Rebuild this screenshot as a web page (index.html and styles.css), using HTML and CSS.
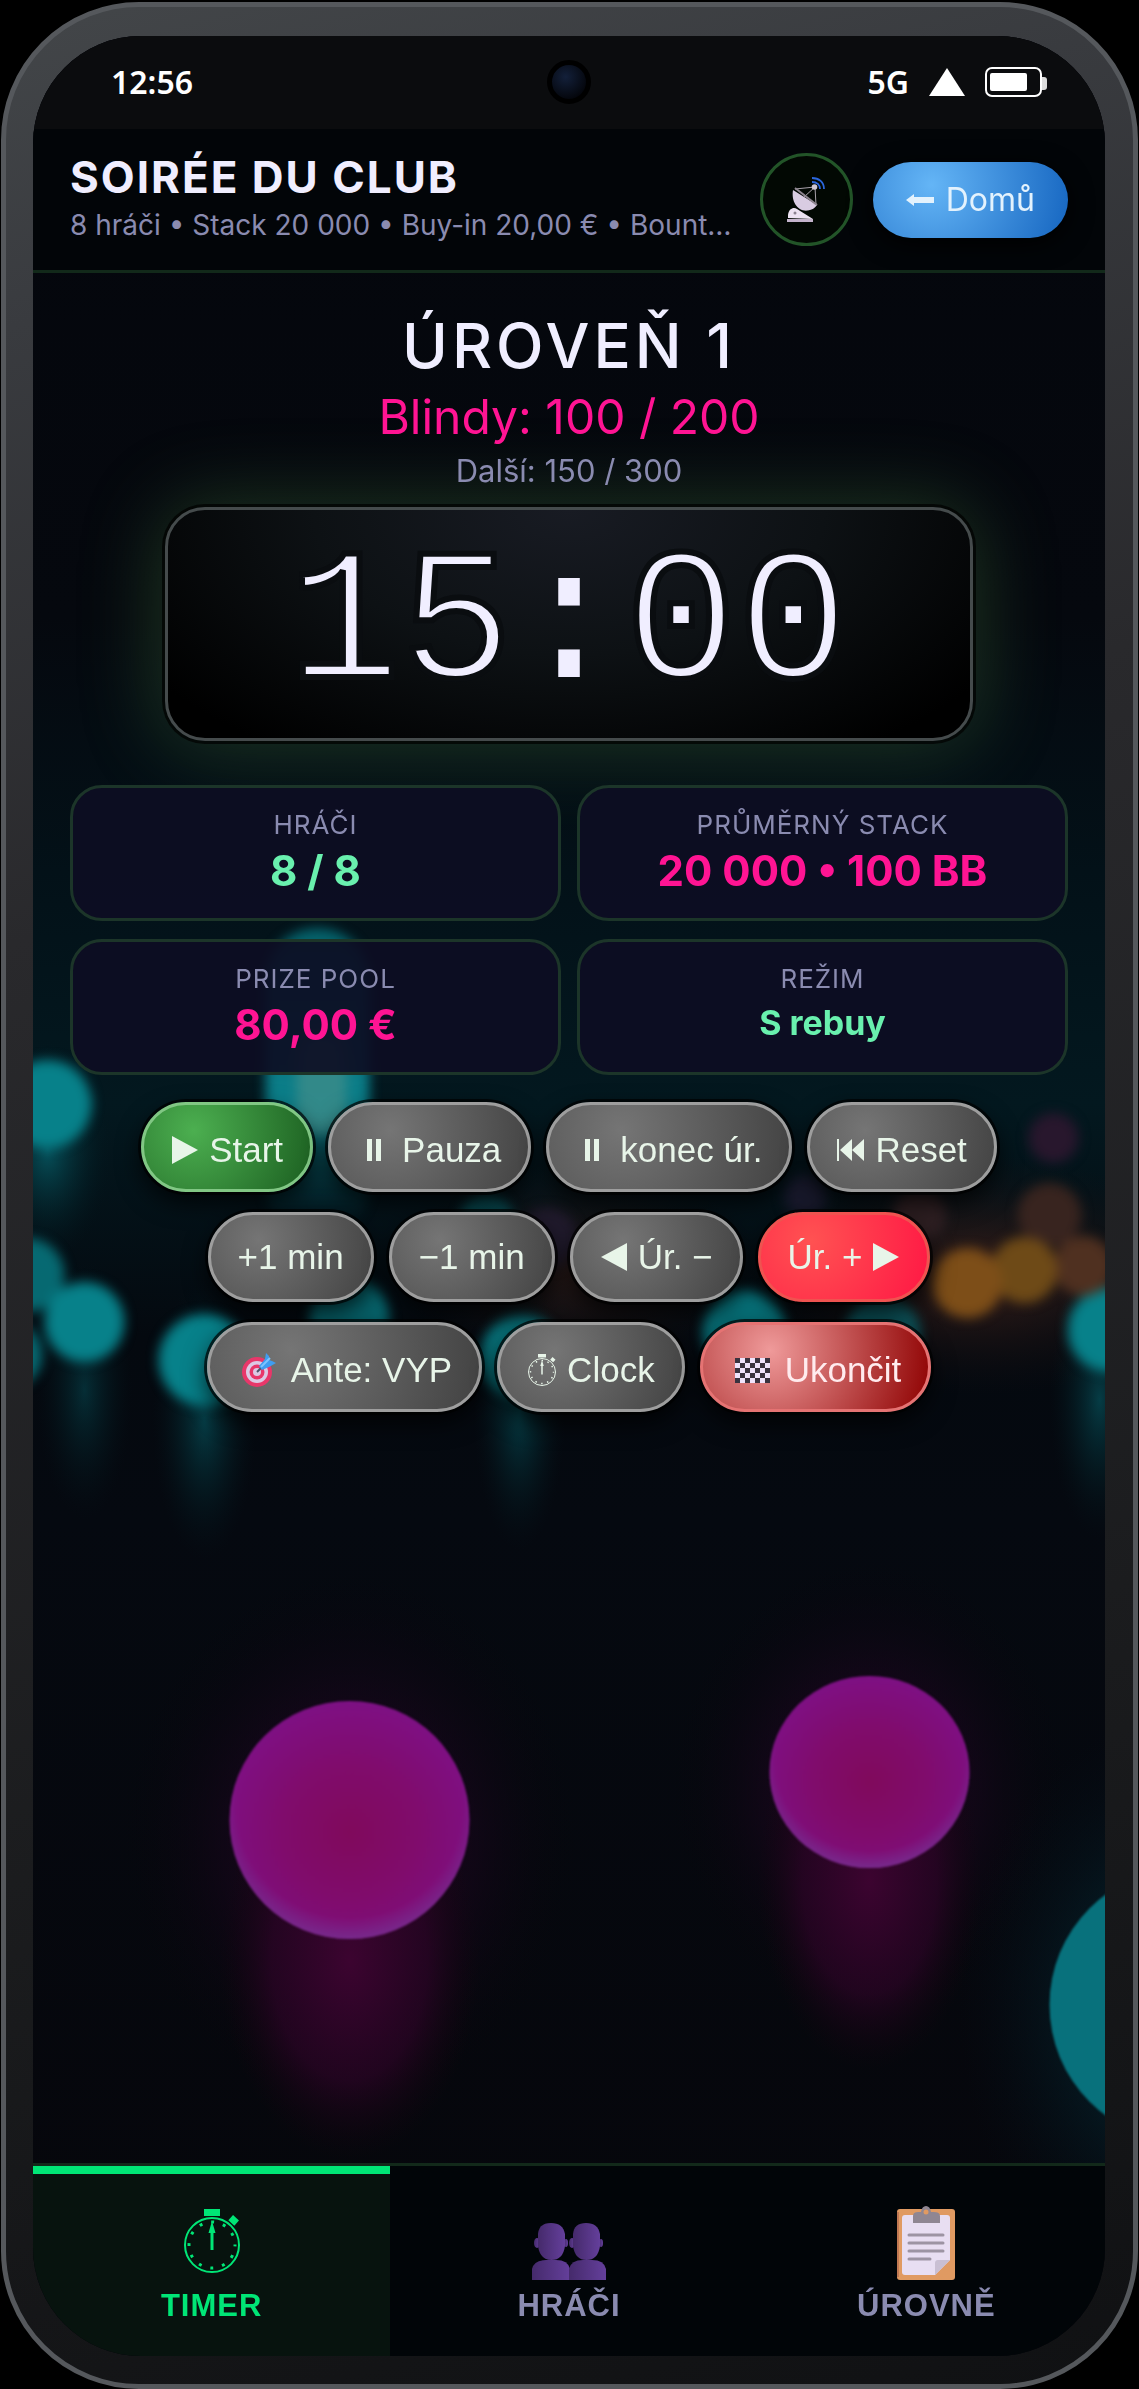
FILE: index.html
```html
<!DOCTYPE html>
<html lang="cs">

<head>
    <meta charset="UTF-8">
    <meta name="viewport" content="width=device-width, initial-scale=1.0">
    <title>Soirée du club</title>
    <link rel="stylesheet" href="styles.css">
</head>

<body>
    <!-- shared shapes -->
    <svg class="sprite" aria-hidden="true">
        <symbol id="stopwatch" viewBox="0 0 58 64">
            <rect x="21" y="0" width="16" height="7" />
            <rect x="47" y="8" width="8" height="7" transform="rotate(42 51 11)" />
            <circle cx="29" cy="36" r="27" fill="none" stroke="currentColor" stroke-width="2" />
            <path d="M27.500 41V24h-2l3.500-12 3.500 12h-2v17z" />
            <circle cx="29" cy="36" r="23" fill="none" stroke="currentColor" stroke-width="3" stroke-dasharray="3 9.040" stroke-dashoffset="1.500" />
        </symbol>
    </svg>

    <div class="phone">
        <div class="screen">
            <!-- bokeh background -->
            <svg class="bokeh" viewBox="33 36 1073 2320" preserveAspectRatio="xMidYMid slice" aria-hidden="true">
                <defs>
                    <filter id="soft" x="-30%" y="-30%" width="160%" height="160%" color-interpolation-filters="sRGB"><feGaussianBlur stdDeviation="6" /></filter>
                    <filter id="edge" color-interpolation-filters="sRGB"><feGaussianBlur stdDeviation="1" /></filter>
                    <linearGradient id="sky" x1="0" y1="0" x2="0" y2="1">
                        <stop offset="0" stop-color="#04060c" />
                        <stop offset=".25" stop-color="#05080e" />
                        <stop offset=".36" stop-color="#031118" />
                        <stop offset=".46" stop-color="#03181f" />
                        <stop offset=".56" stop-color="#04090f" />
                        <stop offset=".64" stop-color="#050910" />
                        <stop offset="1" stop-color="#06060b" />
                    </linearGradient>
                    <radialGradient id="pink" cx=".5" cy=".55" r=".56">
                        <stop offset="0" stop-color="#800a5c" />
                        <stop offset=".5" stop-color="#800c6c" />
                        <stop offset=".9" stop-color="#7f0f80" />
                        <stop offset="1" stop-color="#7c1284" />
                    </radialGradient>
                    <radialGradient id="rim" cx=".5" cy=".44" r=".56">
                        <stop offset=".84" stop-color="#75308f" stop-opacity="0" />
                        <stop offset="1" stop-color="#75308f" stop-opacity=".8" />
                    </radialGradient>
                    <radialGradient id="pinkGlow">
                        <stop offset="0" stop-color="#2c0424" />
                        <stop offset=".55" stop-color="#16061a" stop-opacity=".6" />
                        <stop offset="1" stop-color="#06060b" stop-opacity="0" />
                    </radialGradient>
                    <radialGradient id="pinkTrail">
                        <stop offset="0" stop-color="#3c0430" />
                        <stop offset=".6" stop-color="#2c0426" stop-opacity=".7" />
                        <stop offset="1" stop-color="#16040f" stop-opacity="0" />
                    </radialGradient>
                    <radialGradient id="tealTrail">
                        <stop offset="0" stop-color="#06525c" />
                        <stop offset="1" stop-color="#03161c" stop-opacity="0" />
                    </radialGradient>
                    <radialGradient id="tealGlow">
                        <stop offset="0" stop-color="#063640" />
                        <stop offset="1" stop-color="#04101a" stop-opacity="0" />
                    </radialGradient>
                    <radialGradient id="brownGlow">
                        <stop offset="0" stop-color="#3a1f19" />
                        <stop offset="1" stop-color="#140f12" stop-opacity="0" />
                    </radialGradient>
                    <linearGradient id="beam" x1="0" y1="0" x2="0" y2="1">
                        <stop offset="0" stop-color="#056069" />
                        <stop offset=".6" stop-color="#0c838e" />
                        <stop offset="1" stop-color="#03303a" stop-opacity="0" />
                    </linearGradient>
                </defs>
                <rect x="33" y="36" width="1073" height="2320" fill="url(#sky)" />

                <ellipse cx="980" cy="1275" rx="230" ry="120" fill="url(#brownGlow)" />
                <ellipse cx="580" cy="1270" rx="180" ry="110" fill="url(#brownGlow)" opacity=".7" />
                <ellipse cx="350" cy="1840" rx="230" ry="270" fill="url(#pinkGlow)" />
                <ellipse cx="870" cy="1790" rx="200" ry="230" fill="url(#pinkGlow)" />
                <ellipse cx="1170" cy="2010" rx="210" ry="290" fill="url(#tealGlow)" />

                <!-- reflections under the lights -->
                <ellipse cx="85" cy="1390" rx="48" ry="130" fill="url(#tealTrail)" opacity=".5" />
                <ellipse cx="205" cy="1420" rx="52" ry="140" fill="url(#tealTrail)" opacity=".7" />
                <ellipse cx="520" cy="1410" rx="46" ry="140" fill="url(#tealTrail)" opacity=".7" />
                <ellipse cx="1100" cy="1400" rx="50" ry="140" fill="url(#tealTrail)" opacity=".7" />
                <ellipse cx="48" cy="1150" rx="64" ry="110" fill="url(#tealTrail)" />
                <ellipse cx="350" cy="1960" rx="130" ry="200" fill="url(#pinkTrail)" />
                <ellipse cx="870" cy="1880" rx="112" ry="190" fill="url(#pinkTrail)" />

                <g filter="url(#soft)">
                    <rect x="266" y="928" width="104" height="310" rx="52" fill="url(#beam)" />
                    <rect x="297" y="1030" width="50" height="105" rx="22" fill="#3c8c8a" opacity=".8" />
                    <g fill="#07818a">
                        <circle cx="48" cy="1104" r="44" />
                        <circle cx="28" cy="1275" r="37" opacity=".8" />
                        <circle cx="10" cy="1355" r="33" opacity=".8" />
                        <circle cx="85" cy="1322" r="40" />
                        <circle cx="205" cy="1360" r="46" />
                        <circle cx="350" cy="1318" r="40" opacity=".75" />
                        <circle cx="522" cy="1357" r="42" opacity=".85" />
                        <circle cx="745" cy="1332" r="42" opacity=".85" />
                        <circle cx="883" cy="1334" r="38" opacity=".6" />
                        <circle cx="1110" cy="1330" r="42" />
                        <circle cx="487" cy="1222" r="28" opacity=".5" />
                    </g>
                    <circle cx="1054" cy="1138" r="25" fill="#28172d" />
                    <circle cx="806" cy="1196" r="22" fill="#17182a" />
                    <circle cx="548" cy="1238" r="30" fill="#201a2c" />
                    <circle cx="920" cy="1215" r="27" fill="#2e1f22" />
                    <circle cx="1050" cy="1215" r="32" fill="#38241f" />
                    <circle cx="1084" cy="1266" r="30" fill="#4f3020" />
                    <circle cx="1025" cy="1270" r="33" fill="#6e4a17" />
                    <circle cx="968" cy="1283" r="35" fill="#7d4e18" />
                </g>

                <g filter="url(#edge)">
                    <ellipse cx="350" cy="1820" rx="120" ry="119" fill="url(#pink)" />
                    <ellipse cx="350" cy="1820" rx="120" ry="119" fill="url(#rim)" />
                    <ellipse cx="870" cy="1772" rx="100" ry="96" fill="url(#pink)" />
                    <ellipse cx="870" cy="1772" rx="100" ry="96" fill="url(#rim)" />
                    <circle cx="1187" cy="2005" r="137" fill="#08717c" />
                </g>
            </svg>

            <div class="status-bar">
                <span class="status-time">12:56</span>
                <span class="camera"></span>
                <div class="status-icons">
                    <span>5G</span>
                    <svg width="36" height="28" viewBox="0 0 36 28"><path d="M18 0l18 28H0z" fill="#fff" /></svg>
                    <svg width="62" height="30" viewBox="0 0 62 30">
                        <rect x="1" y="1" width="55" height="28" rx="6" fill="none" stroke="#fff" stroke-width="2" />
                        <rect x="5" y="6" width="37" height="18" rx="2" fill="#fff" />
                        <path d="M57 10h2q3 0 3 3v7q0 3-3 3h-2z" fill="#ddd" />
                    </svg>
                </div>
            </div>

            <header class="top-bar">
                <div class="top-info">
                    <h1 class="top-title">Soirée du club</h1>
                    <p class="top-sub">8 hráči • Stack 20 000 • Buy-in 20,00 € • Bount…</p>
                </div>
                <button class="btn-signal" type="button" aria-label="Vysílání">
                    <svg width="40" height="46" viewBox="0 0 40 46">
                        <path d="M9 12l20-2 1 18M29 10L18 20" fill="none" stroke="#a9a2ab" stroke-width="1" />
                        <path d="M7 13C5 25 12 35 22 33.500 26 33 29 31 31 28z" fill="#d9cce2" />
                        <path d="M9 11l22 17" stroke="#8e8590" stroke-width="2" />
                        <path d="M2 41v-3c1-7 6-8 9-6l16 10z" fill="#ece2f2" />
                        <circle cx="9" cy="36" r="1.500" fill="#8c8291" />
                        <path d="M1 42h26v3H1z" fill="#c3b3cb" />
                        <circle cx="28.500" cy="10" r="2.800" fill="#cfc8d2" />
                        <path d="M26 1c7 0 12 4 12 11M26 5c5 0 8 3 8 7" fill="none" stroke="#2b66dd" stroke-width="1.800" />
                    </svg>
                </button>
                <button class="btn-home" type="button">
                    <svg width="28" height="12" viewBox="0 0 28 12"><path d="M0 6l8-6v3h20v6H8v3z" fill="currentColor" /></svg>
                    Domů
                </button>
            </header>

            <main class="content">
                <section class="level">
                    <h2 class="level-name">ÚROVEŇ 1</h2>
                    <p class="level-blinds">Blindy: 100 / 200</p>
                    <p class="level-next">Další: 150 / 300</p>
                </section>

                <div class="timer">15<span class="timer-colon">:</span>00</div>

                <section class="stats">
                    <div class="stat">
                        <span class="stat-label">HRÁČI</span>
                        <span class="stat-value green">8 / 8</span>
                    </div>
                    <div class="stat">
                        <span class="stat-label">PRŮMĚRNÝ STACK</span>
                        <span class="stat-value">20 000 • 100 BB</span>
                    </div>
                    <div class="stat">
                        <span class="stat-label">PRIZE POOL</span>
                        <span class="stat-value">80,00 €</span>
                    </div>
                    <div class="stat">
                        <span class="stat-label">REŽIM</span>
                        <span class="stat-value green small">S rebuy</span>
                    </div>
                </section>

                <section class="controls">
                    <div class="controls-row low">
                        <button class="btn btn-start" type="button">
                            <svg width="28" height="28" viewBox="0 0 28 28"><path d="M1 0l26 14L1 28z" fill="currentColor" /></svg>
                            Start
                        </button>
                        <button class="btn" type="button">
                            <svg width="34" height="24" viewBox="0 0 34 24"><path d="M9 1h5v22H9zM18 1h5v22h-5z" fill="currentColor" /></svg>
                            Pauza
                        </button>
                        <button class="btn" type="button">
                            <svg width="34" height="24" viewBox="0 0 34 24"><path d="M9 1h5v22H9zM18 1h5v22h-5z" fill="currentColor" /></svg>
                            konec úr.
                        </button>
                        <button class="btn" type="button">
                            <svg width="28" height="24" viewBox="0 0 28 24"><path d="M0 1h2v22H0zM15 1v22L3 12zM27 1v22L15 12z" fill="currentColor" /></svg>
                            Reset
                        </button>
                    </div>
                    <div class="controls-row">
                        <button class="btn" type="button">+1 min</button>
                        <button class="btn" type="button">−1 min</button>
                        <button class="btn" type="button">
                            <svg width="28" height="28" viewBox="0 0 28 28"><path d="M27 0L1 14l26 14z" fill="currentColor" /></svg>
                            Úr. −
                        </button>
                        <button class="btn btn-next" type="button">
                            Úr. +
                            <svg width="28" height="28" viewBox="0 0 28 28"><path d="M1 0l26 14L1 28z" fill="currentColor" /></svg>
                        </button>
                    </div>
                    <div class="controls-row low">
                        <button class="btn" type="button">
                            <svg class="emoji" width="34" height="36" viewBox="0 0 34 36">
                                <circle cx="15" cy="20" r="15" fill="#e8376a" />
                                <circle cx="15" cy="20" r="11" fill="#dcc9e4" />
                                <circle cx="15" cy="20" r="7.500" fill="#e8376a" />
                                <circle cx="15" cy="20" r="4" fill="#dcc9e4" />
                                <path d="M15 20l7-7" stroke="#4a5568" stroke-width="2" />
                                <path d="M17 14l6-7 1-6 3 3v4l3 1 4 2-7 4-7 3z" fill="#3f9df0" />
                                <path d="M19 15l9-9" stroke="#7cc4ff" stroke-width="2" />
                            </svg>
                            Ante: VYP
                        </button>
                        <button class="btn" type="button">
                            <svg width="30" height="32" fill="currentColor"><use href="#stopwatch" /></svg>
                            Clock
                        </button>
                        <button class="btn btn-end" type="button">
                            <svg class="emoji" width="35" height="25" viewBox="0 0 35 25">
                                <rect width="35" height="25" rx="1" fill="#efe3fb" />
                                <path d="M0 0h5v5H0zM10 0h5v5h-5zM20 0h5v5h-5zM30 0h5v5h-5zM5 5h5v5H5zM15 5h5v5h-5zM25 5h5v5h-5zM0 10h5v5H0zM10 10h5v5h-5zM20 10h5v5h-5zM30 10h5v5h-5zM5 15h5v5H5zM15 15h5v5h-5zM25 15h5v5h-5zM0 20h5v5H0zM10 20h5v5h-5zM20 20h5v5h-5zM30 20h5v5h-5z" fill="#3a333f" />
                            </svg>
                            Ukončit
                        </button>
                    </div>
                </section>
            </main>

            <nav class="tabs">
                <button class="tab active" type="button">
                    <svg width="58" height="64" fill="currentColor" class="tab-watch"><use href="#stopwatch" /></svg>
                    TIMER
                </button>
                <button class="tab" type="button">
                    <svg width="74" height="58" viewBox="0 0 74 58">
                        <defs>
                            <linearGradient id="person" x1="0" y1="0" x2="1" y2="0">
                                <stop offset="0" stop-color="#452a6b" />
                                <stop offset="1" stop-color="#643f9b" />
                            </linearGradient>
                        </defs>
                        <g fill="url(#person)">
                            <path d="M0 58V47q2-9 14-9h10q12 0 14 9v11z" />
                            <ellipse cx="5" cy="21" rx="3" ry="5" />
                            <ellipse cx="34" cy="21" rx="2" ry="4" />
                            <path d="M6 12Q7 1 19 1t14 11v12Q31 38 19.500 38T6 24z" />
                        </g>
                        <g fill="url(#person)">
                            <path d="M37 58V47q2-9 14-9h9q12 0 14 9v11z" />
                            <ellipse cx="40" cy="21" rx="3" ry="5" />
                            <ellipse cx="69" cy="21" rx="2" ry="4" />
                            <path d="M41 12Q42 1 54 1t14 11v12Q66 38 54.500 38T41 24z" />
                        </g>
                    </svg>
                    HRÁČI
                </button>
                <button class="tab" type="button">
                    <svg width="58" height="74" viewBox="0 0 58 74">
                        <rect y="3" width="58" height="71" rx="3" fill="#e09a62" />
                        <path d="M1 6v65" stroke="#c07853" stroke-width="2" />
                        <path d="M8 9h42q3 0 3 3v42L38 69H8q-3 0-3-3V12q0-3 3-3z" fill="#e8def2" />
                        <path d="M38 69V57q0-3 3-3h12z" fill="#c9bfd3" />
                        <path d="M16 17v-7q0-4 5-4h3q1-6 5-6t5 6h3q6 0 6 4v7z" fill="#8f8692" />
                        <circle cx="29" cy="6" r="2.500" fill="#e09a62" />
                        <path d="M12 29h34M12 37h34M12 45h34M12 53h21" stroke="#9d94a3" stroke-width="3" stroke-linecap="round" />
                    </svg>
                    ÚROVNĚ
                </button>
            </nav>
        </div>
    </div>
</body>

</html>
```

FILE: styles.css
```css
* {
    box-sizing: border-box;
}

body {
    margin: 0;
    padding: 2px 1px 0;
    background-color: #000;
    color: #f0eeff;
    font-family: Inter, "Liberation Sans", sans-serif;
}

h1,
h2,
p {
    margin: 0;
    font-weight: 400;
}

button {
    font-family: "Liberation Sans", Arial, sans-serif;
    cursor: pointer;
}

svg {
    flex: none;
}

.sprite {
    position: absolute;
    width: 0;
    height: 0;
}

/* phone frame */
.phone {
    display: flex;
    min-height: calc(100vh - 2px);
    padding: 29px 28px 28px 27px;
    border: 5px solid #55585c;
    border-radius: 138px;
    background: linear-gradient(165deg, #434649 0%, #393b3f 12%, #29292c 35%, #1b1c1e 70%, #101113 100%);
}

.screen {
    position: relative;
    isolation: isolate;
    display: flex;
    flex: 1;
    flex-direction: column;
    min-width: 0;
    overflow: hidden;
    border-radius: 108px;
    background-color: #05070c;
}

.bokeh {
    position: absolute;
    inset: 0;
    z-index: -1;
    width: 100%;
    height: 100%;
}

/* status bar */
.status-bar {
    display: grid;
    grid-template-columns: 1fr auto 1fr;
    align-items: center;
    height: 93px;
    padding: 0 58px 2px;
    background-color: #0b0c0e;
    color: #fff;
    font-family: "Noto Sans", sans-serif;
    font-size: 32px;
    font-weight: 600;
}

.status-time {
    padding-left: 20px;
}

.camera {
    width: 44px;
    height: 44px;
    border: 5px solid #000;
    border-radius: 50%;
    background: radial-gradient(circle at 40% 35%, #13203a, #04060c 75%);
}

.status-icons {
    display: flex;
    justify-content: flex-end;
    align-items: center;
    gap: 20px;
}

/* header */
.top-bar {
    display: flex;
    align-items: center;
    gap: 20px;
    height: 144px;
    padding: 0 37px;
    border-bottom: 3px solid #12291a;
    background-color: #020508;
}

.top-info {
    flex: 1;
    min-width: 0;
    padding-bottom: 4px;
}

.top-title {
    font-size: 44px;
    font-weight: 700;
    line-height: 54px;
    letter-spacing: 2px;
    text-transform: uppercase;
}

.top-sub {
    overflow: hidden;
    color: #8a8bb0;
    font-size: 28px;
    line-height: 42px;
    white-space: nowrap;
}

.btn-signal {
    display: flex;
    justify-content: center;
    align-items: center;
    width: 93px;
    height: 93px;
    padding: 0;
    border: 3px solid #225428;
    border-radius: 50%;
    background-color: #020803;
}

.btn-home {
    display: flex;
    align-items: center;
    gap: 12px;
    height: 76px;
    padding: 0 33px;
    border: 0;
    border-radius: 38px;
    background: radial-gradient(circle at 30% 30%, #64b5f6, #1565c0);
    box-shadow: 0 6px 24px #000;
    color: #e3f2fd;
    font-family: Inter, sans-serif;
    font-size: 32px;
}

/* level */
.content {
    flex: 1;
    padding: 35px 37px;
}

.level {
    text-align: center;
}

.level-name {
    font-size: 62px;
    font-weight: 500;
    line-height: 76px;
    letter-spacing: 4px;
}

.level-blinds {
    color: #ff1493;
    font-size: 48px;
    line-height: 66px;
}

.level-next {
    color: #8a8bb0;
    font-size: 31px;
    line-height: 42px;
}

.timer {
    width: 81%;
    margin: 15px auto 0;
    padding-top: 6px;
    border: 3px solid #454b4c;
    border-radius: 40px;
    background: radial-gradient(ellipse at 50% 0, #181b23 0%, #0d1114 45%, #000 90%);
    box-shadow: 0 0 0 3px rgba(0, 0, 0, .7), 0 0 80px 6px rgba(100, 180, 90, .26);
    font-family: "Liberation Mono", monospace;
    font-size: 187px;
    line-height: 222px;
    text-align: center;
    -webkit-text-stroke: 6px #0a0d10;
}

.timer-colon {
    -webkit-text-stroke: 0;
}

/* stats */
.stats {
    display: grid;
    grid-template-columns: 1fr 1fr;
    gap: 18px 16px;
    margin-top: 44px;
}

.stat {
    display: flex;
    flex-direction: column;
    align-items: center;
    gap: 4px;
    height: 136px;
    padding-top: 20px;
    border: 3px solid #1c3529;
    border-radius: 32px;
    background-color: rgba(13, 13, 35, .92);
}

.stat-label {
    color: #8a8bb0;
    font-size: 26px;
    line-height: 34px;
    letter-spacing: 1px;
}

.stat-value {
    color: #ff1493;
    font-size: 42px;
    font-weight: 700;
    line-height: 50px;
}

.stat-value.small {
    font-size: 34px;
    line-height: 46px;
}

.stat-value.green {
    color: #69f0ae;
}

/* controls */
.controls {
    display: flex;
    flex-direction: column;
    gap: 20px;
    margin-top: 27px;
}

.controls-row {
    display: flex;
    justify-content: center;
    gap: 15px;
}

.btn {
    display: flex;
    align-items: center;
    gap: 10px;
    height: 90px;
    padding: 0 27px;
    border: 3px solid #9e9e9e;
    border-radius: 45px;
    background: radial-gradient(circle at 30% 30%, #757575, #424242);
    box-shadow: 0 0 0 3px rgba(0, 0, 0, .7), 0 10px 24px rgba(0, 0, 0, .8);
    color: #e8f5e9;
    font-size: 35px;
    white-space: nowrap;
}

.low .btn {
    padding-top: 6px;
}

.emoji {
    margin: 0 5px;
}

.btn-start {
    border-color: #81c784;
    background: radial-gradient(circle at 30% 30%, #4caf50, #1b5e20);
}

.btn-next {
    border-color: #ef5350;
    background: radial-gradient(circle at 30% 30%, #ff5252, #ff1744);
}

.btn-end {
    border-color: #e57373;
    background: radial-gradient(circle at 30% 30%, #ef9a9a, #8e0000);
    color: #ffebee;
}

/* bottom tabs */
.tabs {
    display: grid;
    grid-template-columns: repeat(3, 1fr);
    height: 193px;
    border-top: 3px solid #12291a;
    background-color: #010508;
}

.tab {
    display: flex;
    flex-direction: column;
    justify-content: flex-end;
    align-items: center;
    gap: 8px;
    padding: 0 0 32px;
    border: 0;
    border-top: 8px solid transparent;
    background: none;
    color: #8a8bb0;
    font-size: 31px;
    font-weight: 700;
    line-height: 36px;
    letter-spacing: 1px;
}

.tab.active {
    border-top-color: #00e676;
    background-color: #07130e;
    color: #00e676;
}

.tab-watch {
    margin-bottom: 7px;
}
```
